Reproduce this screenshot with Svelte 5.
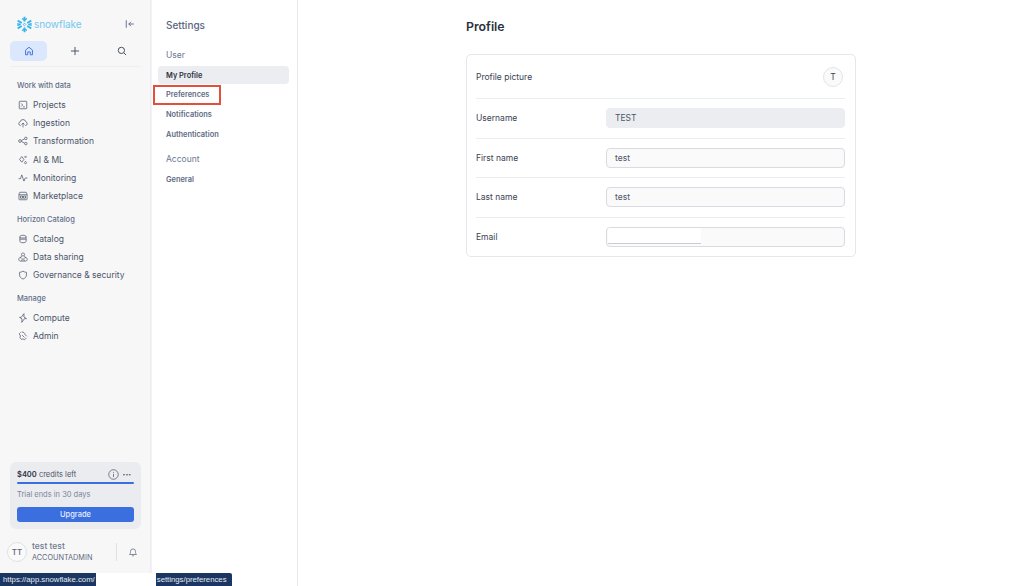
<script>
	const groups = [
		{
			title: 'Work with data',
			items: [
				{ label: 'Projects', icon: 'projects' },
				{ label: 'Ingestion', icon: 'ingestion' },
				{ label: 'Transformation', icon: 'transformation' },
				{ label: 'AI & ML', icon: 'ai' },
				{ label: 'Monitoring', icon: 'monitoring' },
				{ label: 'Marketplace', icon: 'marketplace' }
			]
		},
		{
			title: 'Horizon Catalog',
			items: [
				{ label: 'Catalog', icon: 'catalog' },
				{ label: 'Data sharing', icon: 'sharing' },
				{ label: 'Governance & security', icon: 'governance' }
			]
		},
		{
			title: 'Manage',
			items: [
				{ label: 'Compute', icon: 'compute' },
				{ label: 'Admin', icon: 'admin' }
			]
		}
	];

	const icons = {
		projects: 'M3 2h10a1 1 0 0 1 1 1v10a1 1 0 0 1-1 1H3a1 1 0 0 1-1-1V3a1 1 0 0 1 1-1z M5 5.500L7.500 8 5 10.500 M8 11h3',
		ingestion: 'M4.500 12H4a3 3 0 0 1-.5-5.900 4.600 4.600 0 0 1 9 0A3 3 0 0 1 12 12h-.5 M8 15V8 M5.500 10.500L8 8l2.500 2.500',
		transformation: 'M1 8a2.200 2.200 0 1 0 4.400 0A2.200 2.200 0 0 0 1 8z M10.500 3.800a2 2 0 1 0 4 0 2 2 0 0 0-4 0z M10.500 12.200a2 2 0 1 0 4 0 2 2 0 0 0-4 0z M5.400 7.200l5.100-2.600 M5.400 8.800l5.100 2.600',
		ai: 'M6 2.500L9.500 7 6 11.500 2.500 7z M12 1.500l1.500 1.500L12 4.500 10.500 3z M12 10.500a1.700 1.700 0 1 0 .01 0z',
		monitoring: 'M1 9h3l2-6 3.500 10L11.500 8H15',
		marketplace: 'M3 2h10l1.500 3v8a1 1 0 0 1-1 1h-11a1 1 0 0 1-1-1V5z M1.500 6h13 M4 8h3.200v3.500H4z M8.800 8H12v3.500H8.800z',
		catalog: 'M3 4.500C3 3 5.200 2 8 2s5 1 5 2.500v7c0 1.500-2.200 2.500-5 2.500s-5-1-5-2.500z M3 8.300h10 M3 4.500C3 6 5.200 6.500 8 6.500s5-.5 5-2',
		sharing: 'M8 1.500a2.500 2.500 0 1 0 .01 0z M4 9a2.800 2.800 0 1 0 .01 0z M12 9a2.800 2.800 0 1 0 .01 0z M6.300 6L3 9.500 M9.700 6L13 9.500 M5 14.500h6',
		governance: 'M8 1.800c1.800 1.200 3.400 1.700 5.500 1.900v4.500c0 3-2.300 5-5.500 6.300-3.200-1.300-5.500-3.300-5.500-6.300V3.700C4.600 3.500 6.200 3 8 1.800z',
		compute: 'M9.500 1L5 7H2.500L6.500 9.500 6 15l4.500-6H13.500L9.500 6.500z',
		admin: 'M4.500 2L2 4.500 4 8 3 10.500 5.500 13.500 8 12.500 10.500 14 13.500 11 M6 1.500c3 0 5 2 5.500 4.500L14 8.500 M6.500 6.500l4 4'
	};

	const settingsUser = ['My Profile', 'Preferences', 'Notifications', 'Authentication'];
	const fields = [
		{ label: 'First name', value: 'test' },
		{ label: 'Last name', value: 'test' }
	];
</script>

<div class="page">
	<aside class="sidebar">
		<div class="brand">
			<svg class="flake" viewBox="0 0 20 20" width="17" height="17" fill="none" stroke="#38b6e8" stroke-width="2.200">
				<path d="M10 1v5.500M10 13.500V19M2 5.500l4.800 2.800M13.200 11.700L18 14.500M2 14.500l4.800-2.800M13.200 8.300L18 5.500" />
				<path d="M7.300 2.800L10 5.200l2.700-2.400M7.300 17.200L10 14.800l2.700 2.400M1.500 9l4 1-4 1M18.500 9l-4 1 4 1" stroke-width="1.600" />
				<path d="M10 8.400l1.600 1.600-1.600 1.600L8.400 10z" stroke-width="1.100" />
			</svg>
			<span class="wordmark">snowflake</span>
			<svg class="collapse" viewBox="0 0 16 16" width="10" height="10" fill="none" stroke="#5d6a85" stroke-width="1.500">
				<path d="M2 2v12M14 8H6M9.500 4.500L6 8l3.500 3.500" />
			</svg>
		</div>

		<div class="tabs">
			<button class="tab active" aria-label="Home">
				<svg viewBox="0 0 16 16" width="10" height="10" fill="none" stroke="#3f6fdd" stroke-width="1.500" stroke-linejoin="round">
					<path d="M2.500 14V6.500L8 2l5.500 4.500V14H10V9.500H6V14z" />
				</svg>
			</button>
			<button class="tab" aria-label="New">
				<svg viewBox="0 0 16 16" width="10" height="10" fill="none" stroke="#3c4657" stroke-width="1.400">
					<path d="M8 1.500v13M1.500 8h13" />
				</svg>
			</button>
			<button class="tab" aria-label="Search">
				<svg viewBox="0 0 16 16" width="10" height="10" fill="none" stroke="#3c4657" stroke-width="1.500">
					<circle cx="7" cy="7" r="5" />
					<path d="M11 11l3.500 3.500" />
				</svg>
			</button>
		</div>

		<nav class="nav">
			{#each groups as group}
				<div class="group">
					<h3>{group.title}</h3>
					{#each group.items as item}
						<div class="nav-item">
							<svg viewBox="0 0 16 16" fill="none" stroke="#4d586b" stroke-width="1.200">
								<path d={icons[item.icon]} />
							</svg>
							<span>{item.label}</span>
						</div>
					{/each}
				</div>
			{/each}
		</nav>

		<div class="credits">
			<div class="credits-top">
				<span><b>$400</b> credits left</span>
				<svg viewBox="0 0 12 12" width="11" height="11" fill="none" stroke="#4d586b" stroke-width=".8">
					<circle cx="6" cy="6" r="5.200" />
					<path d="M6 5.300v3.400M6 3.300v.9" />
				</svg>
				<span class="dots">•••</span>
			</div>
			<div class="bar"></div>
			<div class="trial">Trial ends in 30 days</div>
			<button class="upgrade">Upgrade</button>
		</div>

		<div class="user">
			<div class="avatar">TT</div>
			<div class="who">
				<div class="name">test test</div>
				<div class="role">ACCOUNTADMIN</div>
			</div>
			<div class="divider"></div>
			<svg class="bell" viewBox="0 0 16 16" width="10" height="10" fill="none" stroke="#6b7587" stroke-width="1.300">
				<path d="M2.500 12c1-1 1.500-2 1.500-5a4 4 0 0 1 8 0c0 3 .5 4 1.500 5z M6.500 14h3" />
			</svg>
		</div>
	</aside>

	<section class="settings">
		<h2>Settings</h2>
		<h4>User</h4>
		{#each settingsUser as entry, i}
			<div class="settings-item" class:selected={i === 0} class:marked={i === 1}>{entry}</div>
		{/each}
		<h4 class="account">Account</h4>
		<div class="settings-item">General</div>
	</section>

	<main class="main">
		<div class="content">
			<h1>Profile</h1>
			<div class="card">
				<div class="row picture">
					<span>Profile picture</span>
					<div class="pic">T</div>
				</div>
				<div class="row">
					<span>Username</span>
					<div class="input disabled">TEST</div>
				</div>
				{#each fields as field}
					<div class="row">
						<span>{field.label}</span>
						<div class="input">{field.value}</div>
					</div>
				{/each}
				<div class="row">
					<span>Email</span>
					<div class="input email"><div class="redact"></div></div>
				</div>
			</div>
		</div>
	</main>

	<div class="status">https://app.snowflake.com/<span class="mask"></span>settings/preferences</div>
</div>

<style>
	:global(body) {
		margin: 0;
		background: #fff;
		font-family: Inter, "Liberation Sans", sans-serif;
		color: #2c3443;
	}

	.page {
		position: relative;
		display: flex;
		width: 1024px;
		height: 586px;
		overflow: hidden;
	}

	.sidebar {
		display: flex;
		flex-direction: column;
		box-sizing: border-box;
		width: 151px;
		flex: none;
		background: #f7f7f8;
		border-right: 1px solid #eceef2;
		padding: 15px 9px 0 10px;
	}

	.brand {
		display: flex;
		align-items: center;
		height: 18px;
		padding-left: 6px;
	}

	.wordmark {
		margin-left: 1px;
		font-size: 10px;
		letter-spacing: -0.05px;
		color: #74c7ec;
	}

	.collapse {
		margin-left: auto;
		margin-right: 6px;
	}

	.tabs {
		display: flex;
		margin-top: 8px;
		padding-bottom: 5px;
		border-bottom: 1px solid #eeeff3;
		justify-content: space-between;
		padding-right: 1px;
	}

	.tab {
		display: flex;
		align-items: center;
		justify-content: center;
		width: 37px;
		height: 20px;
		padding: 0;
		border: 0;
		border-radius: 5px;
		background: none;
	}

	.tab.active {
		background: #dbe7fd;
	}

	.nav {
		flex: 1;
		padding-top: 12px;
	}

	.group {
		margin-bottom: 7.500px;
	}

	h3 {
		margin: 0 0 4px;
		padding-left: 7px;
		font-size: 7.500px;
		line-height: 13px;
		font-weight: 500;
		color: #626e88;
	}

	.nav-item {
		display: flex;
		align-items: center;
		height: 18.200px;
		gap: 5.500px;
		padding-left: 7.500px;
		font-size: 8.500px;
		color: #4b5568;
	}

	.nav-item svg {
		width: 10px;
		height: 10px;
	}

	.credits {
		box-sizing: border-box;
		height: 67px;
		padding: 6px 7px;
		border-radius: 6px;
		background: #ebecf0;
	}

	.credits-top {
		display: flex;
		align-items: center;
		gap: 3px;
		height: 12px;
		font-size: 7.500px;
		color: #4b5568;
	}

	.credits-top span:first-child {
		flex: 1;
	}

	.credits-top b {
		font-weight: 600;
		color: #2c3443;
	}

	.dots {
		margin: 0 3px 0 1px;
		font-size: 5px;
		color: #4b5568;
	}

	.bar {
		height: 2px;
		margin-top: 2px;
		border-radius: 1px;
		background: #3b6fe0;
	}

	.trial {
		margin-top: 5px;
		font-size: 7.500px;
		line-height: 12px;
		color: #7c8699;
	}

	.upgrade {
		display: block;
		width: 100%;
		height: 15px;
		margin-top: 6px;
		padding: 0;
		border: 0;
		border-radius: 3px;
		background: #3b6fe0;
		color: #e8eefc;
		font: 500 7.500px Inter, sans-serif;
	}

	.user {
		display: flex;
		align-items: center;
		height: 34px;
		margin: 6px -3px 17px;
	}

	.avatar {
		display: flex;
		align-items: center;
		justify-content: center;
		box-sizing: border-box;
		width: 20px;
		height: 20px;
		border: 1px solid #dfe1e7;
		border-radius: 50%;
		background: #fafafb;
		font-size: 8px;
		font-weight: 500;
		color: #5a6478;
	}

	.who {
		flex: 1;
		margin-left: 5px;
		margin-top: -2px;
	}

	.name {
		font-size: 8.500px;
		line-height: 12px;
		font-weight: 500;
		color: #6f7a8e;
	}

	.role {
		font-size: 7.300px;
		line-height: 11px;
		color: #5f6a80;
	}

	.divider {
		width: 1px;
		height: 18px;
		margin-right: 11px;
		background: #dfe1e7;
	}

	.bell {
		margin-right: 6px;
	}

	.settings {
		box-sizing: border-box;
		width: 147px;
		flex: none;
		padding: 0 8px 0 7px;
		border-right: 1px solid #e8e9ed;
		box-shadow: inset 1px 0 0 #f1f2f5;
	}

	h2 {
		margin: 18px 0 0 8px;
		font-size: 10px;
		line-height: 14px;
		font-weight: 500;
		color: #5b6680;
	}

	h4 {
		margin: 16.500px 0 4.500px 8px;
		font-size: 8.500px;
		line-height: 13px;
		font-weight: 400;
		color: #6d7892;
	}

	h4.account {
		margin-top: 9.600px;
		margin-bottom: 5px;
	}

	.settings-item {
		display: flex;
		align-items: center;
		height: 18px;
		margin-bottom: 1.800px;
		padding-left: 8px;
		border-radius: 4px;
		font-size: 7.400px;
		font-weight: 600;
		color: #5f6b84;
		position: relative;
	}

	.settings-item.selected {
		background: #ecedf1;
		color: #2c3443;
	}

	/* red annotation box drawn on the screenshot */
	.settings-item.marked::after {
		content: '';
		position: absolute;
		left: -5px;
		top: -1px;
		box-sizing: border-box;
		width: 68px;
		height: 20px;
		border: 2px solid #e0503c;
	}

	.main {
		flex: 1;
		display: flex;
		justify-content: center;
	}

	.content {
		width: 390px;
	}

	h1 {
		margin: 19px 0 0;
		font-size: 12.300px;
		line-height: 16px;
		font-weight: 600;
		color: #2b3240;
	}

	.card {
		box-sizing: border-box;
		margin-top: 19px;
		padding: 0 10px 0 9px;
		border: 1px solid #e6e7ec;
		border-radius: 5px;
	}

	.row {
		display: grid;
		grid-template-columns: 130px 1fr;
		align-items: center;
		box-sizing: border-box;
		height: 39.600px;
		font-size: 8.500px;
		color: #3a4352;
		border-bottom: 1px solid #ecedf1;
	}

	.row:last-child {
		border-bottom: 0;
		height: 38.500px;
	}

	.row.picture {
		grid-template-columns: 1fr auto;
		height: 44px;
	}

	.pic {
		display: flex;
		align-items: center;
		justify-content: center;
		box-sizing: border-box;
		width: 20px;
		height: 20px;
		margin-right: 2px;
		border: 1px solid #e3e4e9;
		border-radius: 50%;
		background: #fafafb;
		font-size: 8.500px;
	}

	.input {
		box-sizing: border-box;
		height: 20px;
		padding-left: 8px;
		line-height: 18px;
		border: 1px solid #d9dbe3;
		border-radius: 4px;
		background: #fafafb;
		color: #4b5568;
		overflow: hidden;
	}

	.input.disabled {
		border-color: #ecedf1;
		background: #ecedf1;
	}

	.input.email {
		padding: 0;
	}

	.redact {
		width: 93px;
		height: 15px;
		margin-left: 1px;
		background: #fff;
		border-bottom: 1px solid #c9ccd4;
	}

	.status {
		position: absolute;
		left: 0;
		bottom: 0;
		box-sizing: border-box;
		display: flex;
		align-items: center;
		width: 232px;
		height: 13px;
		padding-left: 3px;
		border-radius: 0 2px 0 0;
		background: #1b3661;
		color: #e6ecf5;
		font: 7.750px "Liberation Sans", sans-serif;
		white-space: nowrap;
	}

	.mask {
		width: 60px;
		height: 13px;
		margin: 0 1px;
		flex: none;
		background: #fff;
	}
</style>
